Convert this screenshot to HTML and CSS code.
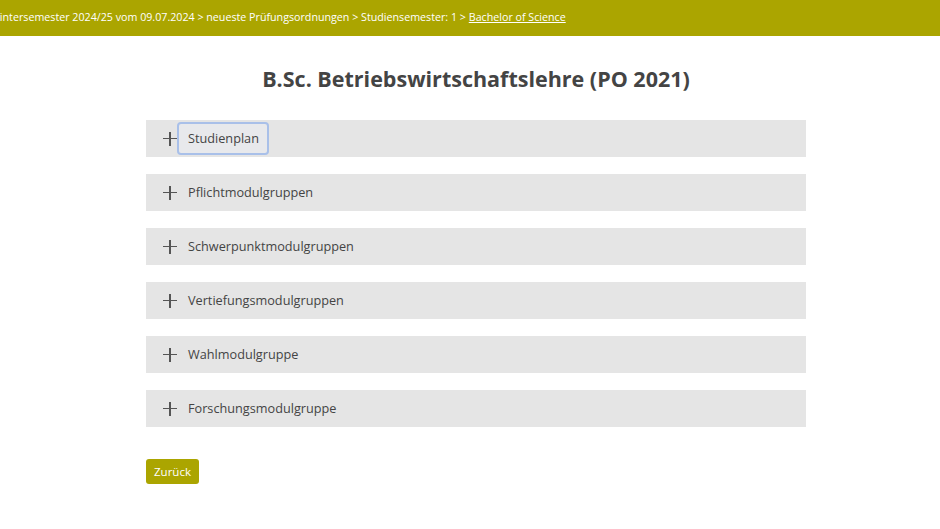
FILE: index.html
```html
<!DOCTYPE html>
<html lang="de">
<head>
<meta charset="UTF-8" />
<meta name="viewport" content="width=device-width, initial-scale=1" />
<title>B.Sc. Betriebswirtschaftslehre (PO 2021)</title>
<link rel="stylesheet" href="styles.css">
</head>
<body>
  <header class="topbar">
    <nav class="breadcrumb">
      <span>Wintersemester 2024/25 vom 09.07.2024</span> &gt;
      <span>neueste Prüfungsordnungen</span> &gt;
      <span>Studiensemester: 1</span> &gt;
      <a href="#">Bachelor of Science</a>
    </nav>
  </header>

  <main class="content">
    <h1 class="title">B.Sc. Betriebswirtschaftslehre (PO 2021)</h1>

    <div class="accordion">
      <div class="acc-item">
        <span class="acc-icon"></span>
        <button class="acc-label focused">Studienplan</button>
      </div>
      <div class="acc-item">
        <span class="acc-icon"></span>
        <button class="acc-label">Pflichtmodulgruppen</button>
      </div>
      <div class="acc-item">
        <span class="acc-icon"></span>
        <button class="acc-label">Schwerpunktmodulgruppen</button>
      </div>
      <div class="acc-item">
        <span class="acc-icon"></span>
        <button class="acc-label">Vertiefungsmodulgruppen</button>
      </div>
      <div class="acc-item">
        <span class="acc-icon"></span>
        <button class="acc-label">Wahlmodulgruppe</button>
      </div>
      <div class="acc-item">
        <span class="acc-icon"></span>
        <button class="acc-label">Forschungsmodulgruppe</button>
      </div>
    </div>

    <button class="back">Zurück</button>
  </main>
</body>
</html>
```

FILE: styles.css
```css
* {
  box-sizing: border-box;
}
body {
  margin: 0;
  background: #fff;
  font-family: 'Open Sans', 'Noto Sans', sans-serif;
  color: #444;
}
.topbar {
  background: #aba500;
  height: 36px;
  display: flex;
  align-items: center;
  overflow: hidden;
}
.breadcrumb {
  white-space: nowrap;
  color: #fff;
  font-size: 10.7px;
  margin-left: -10px;
  padding-bottom: 2px;
}
.breadcrumb a {
  color: #fff;
  text-decoration: underline;
}
.content {
  width: 672px;
  margin: 0 auto;
  padding: 28px 0 0 12px;
}
.title {
  text-align: center;
  font-size: 21.5px;
  font-weight: 700;
  color: #444;
  margin: 0 0 26px;
  line-height: 30px;
}
.accordion {
  display: flex;
  flex-direction: column;
  gap: 17px;
}
.acc-item {
  background: #e5e5e5;
  height: 37px;
  display: flex;
  align-items: center;
  padding-left: 17px;
}
.acc-icon {
  position: relative;
  width: 14px;
  height: 14px;
  margin-right: 0;
}
.acc-icon::before,
.acc-icon::after {
  content: '';
  position: absolute;
  background: #555;
}
.acc-icon::before {
  left: 0;
  right: 0;
  top: 6px;
  height: 1.5px;
}
.acc-icon::after {
  top: 0;
  bottom: 0;
  left: 6px;
  width: 1.5px;
}
.acc-label {
  font-family: inherit;
  font-size: 12.7px;
  color: #444;
  background: none;
  border: 2px solid transparent;
  border-radius: 4px;
  padding: 5px 8px 6px 9px;
  cursor: pointer;
}
.acc-label.focused {
  border-color: #a9c0e9;
  background: #e8e9ec;
}
.back {
  margin-top: 32px;
  background: #aba500;
  color: #fff;
  border: none;
  border-radius: 3px;
  font-family: inherit;
  font-size: 11.5px;
  padding: 4px 8px;
  height: 25px;
  cursor: pointer;
}
```
